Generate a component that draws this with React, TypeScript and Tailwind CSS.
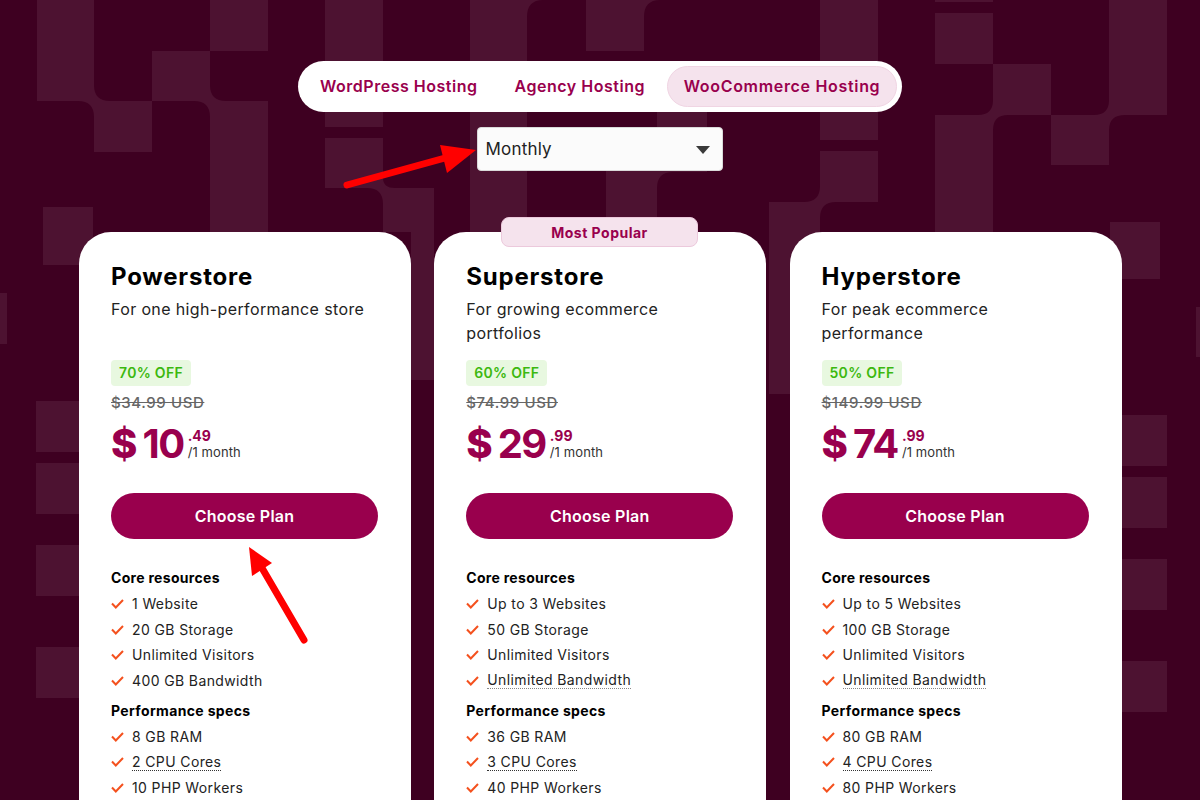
const font = "font-['Inter','Liberation_Sans',sans-serif]";

type Feature = { label: string; hint?: "light" | "dark" };

type Plan = {
  name: string;
  blurb: string;
  off: string;
  was: string;
  dollars: string;
  cents: string;
  core: Feature[];
  perf: Feature[];
};

const plans: Plan[] = [
  {
    name: "Powerstore",
    blurb: "For one high-performance store",
    off: "70% OFF",
    was: "$34.99 USD",
    dollars: "10",
    cents: ".49",
    core: [
      { label: "1 Website" },
      { label: "20 GB Storage" },
      { label: "Unlimited Visitors" },
      { label: "400 GB Bandwidth" },
    ],
    perf: [{ label: "8 GB RAM" }, { label: "2 CPU Cores", hint: "dark" }, { label: "10 PHP Workers" }],
  },
  {
    name: "Superstore",
    blurb: "For growing ecommerce portfolios",
    off: "60% OFF",
    was: "$74.99 USD",
    dollars: "29",
    cents: ".99",
    core: [
      { label: "Up to 3 Websites" },
      { label: "50 GB Storage" },
      { label: "Unlimited Visitors" },
      { label: "Unlimited Bandwidth", hint: "light" },
    ],
    perf: [{ label: "36 GB RAM" }, { label: "3 CPU Cores", hint: "dark" }, { label: "40 PHP Workers" }],
  },
  {
    name: "Hyperstore",
    blurb: "For peak ecommerce performance",
    off: "50% OFF",
    was: "$149.99 USD",
    dollars: "74",
    cents: ".99",
    core: [
      { label: "Up to 5 Websites" },
      { label: "100 GB Storage" },
      { label: "Unlimited Visitors" },
      { label: "Unlimited Bandwidth", hint: "light" },
    ],
    perf: [{ label: "80 GB RAM" }, { label: "4 CPU Cores", hint: "dark" }, { label: "80 PHP Workers" }],
  },
];

function BackgroundPattern() {
  return (
    <svg className="absolute inset-0" width="1200" height="800" viewBox="0 0 1200 800" fill="#4d1231">
      <path d="M37 0H94V85Q94 101 110 101H152V51H210V85Q210 101 226 101H268V232H434V380H411V232H210V117Q210 101 194 101H152V152H94V117Q94 101 78 101H37Z" />
      <rect x="210" y="0" width="58" height="51" />
      <path d="M325 0H383V127H325Z" />
      <path d="M325 138H383V178Q383 188 395 188H434V232H383V204Q383 188 367 188H325Z" />
      <path d="M470 0H543Q527 0 527 17V232H470Z" />
      <path d="M586 0H660Q644 0 644 17V51H586Z" />
      <path d="M657 112H707V172H673Q657 172 657 188V232H606V130H657Z" />
      <path d="M820 0H878V140H820Z" />
      <path d="M820 151H878V202H836Q820 202 820 218V394H769V202H804Q820 202 820 186Z" />
      <path d="M935 0H993V2H935Z" />
      <rect x="935" y="13" width="58" height="51" />
      <path d="M935 115H978Q993 115 993 100V64H1051V115H1094Q1109 115 1109 100V0H1167V115H1125Q1109 115 1109 130V165H1051V115H1008Q993 115 993 130V232H935Z" />
      <rect x="43" y="207" width="50" height="58" />
      <rect x="1110" y="222" width="50" height="57" />
      <rect x="0" y="293" width="7" height="51" />
      <rect x="1196" y="307" width="4" height="50" />
      <rect x="36" y="401" width="50" height="51" />
      <rect x="36" y="463" width="50" height="51" />
      <rect x="36" y="545" width="50" height="51" />
      <rect x="36" y="647" width="50" height="51" />
      <rect x="1115" y="415" width="52" height="51" />
      <rect x="1115" y="477" width="52" height="51" />
      <rect x="1115" y="559" width="52" height="51" />
      <rect x="1115" y="661" width="52" height="51" />
    </svg>
  );
}

function RedArrows() {
  return (
    <svg className="absolute inset-0 z-20" width="1200" height="800" viewBox="0 0 1200 800" fill="#ff0000">
      <path d="M347 185L445 158" stroke="#ff0000" strokeWidth="7" strokeLinecap="round" />
      <path d="M476 150L440 145L447 173Z" />
      <path d="M304 640L262 568" stroke="#ff0000" strokeWidth="7" strokeLinecap="round" />
      <path d="M249 547L272 563L252 576Z" />
    </svg>
  );
}

function Check() {
  return (
    <svg width="13" height="10" viewBox="0 0 13 10" fill="none" className="shrink-0">
      <path d="M1 4.5L4.8 8.5L12 1" stroke="#f4511e" strokeWidth="2" />
    </svg>
  );
}

function FeatureRow({ feature }: { feature: Feature }) {
  return (
    <li className="flex h-[25.5px] items-center gap-[8px]">
      <Check />
      <span
        className={
          feature.hint === "dark"
            ? "border-b border-dotted border-[#333333] leading-[16px] tracking-[0.38px]"
            : feature.hint === "light"
              ? "border-b border-dotted border-[#888888] leading-[16px] tracking-[0.38px]"
              : "leading-[16px] tracking-[0.38px]"
        }
      >
        {feature.label}
      </span>
    </li>
  );
}

function PlanCard({ plan }: { plan: Plan }) {
  return (
    <div className="w-[332px] shrink-0 rounded-t-[32px] bg-white pt-[31px] pr-[33px] pb-10 pl-[32px] text-[#222222]">
      <h2 className="text-[24px] leading-[28px] font-bold tracking-[0.8px] text-black">{plan.name}</h2>
      <p className="mt-[6px] h-[48px] w-[260px] text-[16px] leading-[24px] tracking-[0.37px]">{plan.blurb}</p>
      <span className="mt-[15px] block w-fit rounded-[4px] bg-[#e8f8e0] px-[8px] py-[4px] text-[14px] leading-[18px] font-semibold tracking-[0.3px] text-[#3cb80f]">
        {plan.off}
      </span>
      <p className="mt-[7px] text-[15px] leading-[20px] font-medium tracking-[0.6px] text-[#666666] line-through">
        {plan.was}
      </p>
      <div className="mt-[7px] flex h-[48px] items-center text-[#99004d]">
        <span className="text-[40px] leading-[48px] font-extrabold">$</span>
        <span className="ml-[5px] text-[40px] leading-[48px] font-bold tracking-[-1.5px]">{plan.dollars}</span>
        <div className="ml-[4px] flex flex-col">
          <span className="text-[14px] leading-[16px] font-bold">{plan.cents}</span>
          <span className="text-[13px] leading-[16px] tracking-[0.1px] text-[#333333]">/1 month</span>
        </div>
      </div>
      <button
        type="button"
        className="mt-[25px] flex h-[46px] w-full items-center justify-center rounded-full bg-[#99004d] text-[16px] font-semibold tracking-[0.25px] text-white"
      >
        Choose Plan
      </button>
      <h3 className="mt-[30px] text-[14px] leading-[18px] font-bold tracking-[0.3px] text-black">Core resources</h3>
      <ul className="mt-[4.5px] text-[14px]">
        {plan.core.map((feature) => (
          <FeatureRow key={feature.label} feature={feature} />
        ))}
      </ul>
      <h3 className="mt-[8.5px] text-[14px] leading-[18px] font-bold tracking-[0.35px] text-black">Performance specs</h3>
      <ul className="mt-[4px] text-[14px]">
        {plan.perf.map((feature) => (
          <FeatureRow key={feature.label} feature={feature} />
        ))}
      </ul>
    </div>
  );
}

export default function App() {
  return (
    <div className={`relative h-[800px] w-full overflow-hidden bg-[#3e0021] ${font}`}>
      <BackgroundPattern />
      <RedArrows />
      <div className="relative z-10 flex flex-col items-center pt-[61px]">
        <nav className="flex h-[51px] w-[604px] items-center rounded-full bg-white pr-[5px] pb-[2px] pl-[22px] text-[16px] font-semibold tracking-[0.52px] text-[#99004d]">
          <a>WordPress Hosting</a>
          <a className="ml-[37px]">Agency Hosting</a>
          <a className="mt-[2px] ml-auto flex h-[41px] w-[230px] items-center justify-center rounded-full border border-[#f0d5e3] bg-[#f5e3ed] pb-[2px] tracking-[0.68px]">
            WooCommerce Hosting
          </a>
        </nav>
        <div className="mt-[15px] -ml-[1px] flex h-[44px] w-[246px] items-center justify-between rounded-[4px] border border-[#d9d9d9] bg-[#fbfbfb] pt-[2px] pr-[12px] pl-[8px] text-[17px] tracking-[0.2px] text-[#222222]">
          Monthly
          <svg width="14" height="8" viewBox="0 0 14 8" fill="#3a3a3a">
            <path d="M0 0H14L7 8Z" />
          </svg>
        </div>
        <div className="relative mt-[61px] flex gap-[23.25px] pl-[0.5px]">
          <span className="absolute -top-[15px] left-[422.5px] z-10 flex h-[30px] w-[197px] items-center justify-center rounded-[8px] border border-[#ecc9dc] bg-[#f5e3ed] text-[14px] font-bold tracking-[0.5px] text-[#99004d]">
            Most Popular
          </span>
          {plans.map((plan) => (
            <PlanCard key={plan.name} plan={plan} />
          ))}
        </div>
      </div>
    </div>
  );
}
